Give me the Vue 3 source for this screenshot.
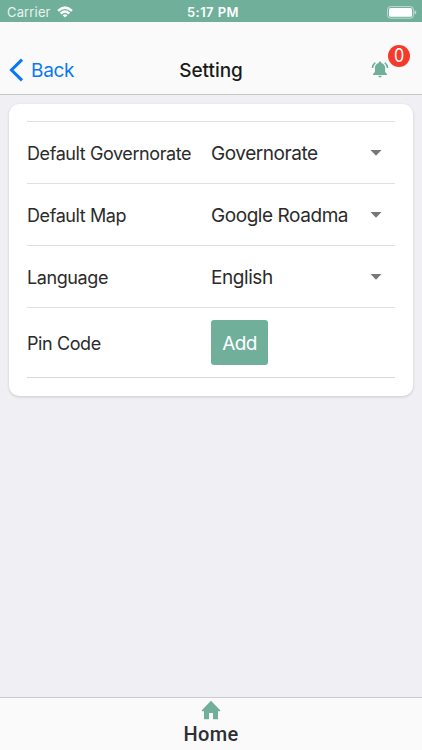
<script setup>
const rows = [
  { label: 'Default Governorate', value: 'Governorate', key: 'gov' },
  { label: 'Default Map', value: 'Google Roadma', key: 'map' },
  { label: 'Language', value: 'English', key: 'lang' },
]
</script>

<template>
  <div class="screen">
    <div class="status">
      <div class="side">
        <span class="carrier">Carrier</span>
        <svg class="wifi" width="16" height="12" viewBox="0 0 16 12">
          <path d="M.2 4Q8-3.4 15.8 4L14.1 5.7Q8 .2 1.9 5.7Z" fill="#fff" />
          <path d="M2.9 6.7Q8 2 13.1 6.7L11.4 8.4Q8 5.3 4.6 8.4Z" fill="#fff" />
          <path d="M5.6 9.2Q8 7.2 10.4 9.2L8 11.6Z" fill="#fff" />
        </svg>
      </div>
      <span class="time">5:17 PM</span>
      <div class="side right">
        <svg width="30" height="13" viewBox="0 0 30 13">
          <rect x=".6" y=".6" width="25.8" height="11.6" rx="3" fill="none" stroke="#fff" stroke-opacity=".55" />
          <rect x="2" y="2" width="23" height="8.8" rx="1.6" fill="#fff" />
          <path d="M27.6 4.3Q29.3 5 29.3 6.4Q29.3 7.8 27.6 8.5Z" fill="#fff" fill-opacity=".6" />
        </svg>
      </div>
    </div>

    <header class="navbar">
      <div class="back">
        <svg width="15" height="24" viewBox="0 0 15 24">
          <path d="M13 1.6L2.5 12L13 22.4" fill="none" stroke="#0a78f5" stroke-width="3.1" />
        </svg>
        <span class="back-text">Back</span>
      </div>
      <h1>Setting</h1>
      <div class="alerts">
        <svg width="18" height="18" viewBox="0 0 18 18" fill="#70b09b">
          <path d="M9 .6C9.8 .6 10.3 1.1 10.3 1.9C13 2.5 14.1 4.6 14.1 7V11L16 12.9V13.9H2V12.9L3.9 11V7C3.9 4.6 5 2.5 7.7 1.9C7.7 1.1 8.2 .6 9 .6Z" />
          <path d="M7.1 14.8H10.9Q10.5 16.6 9 16.6Q7.5 16.6 7.1 14.8Z" />
          <path d="M4.3 1.6Q1.7 3.5 1.4 7M13.7 1.6Q16.3 3.5 16.6 7" fill="none" stroke="#70b09b" stroke-width="1.5" />
        </svg>
        <span class="badge"><span class="count">0</span></span>
      </div>
    </header>

    <main>
      <section class="card">
        <div v-for="row in rows" :key="row.key" class="row">
          <div class="label">{{ row.label }}</div>
          <div class="value">{{ row.value }}</div>
          <svg class="caret" width="12" height="6" viewBox="0 0 12 6"><path d="M.5 0H11.5L6 5.7Z" fill="#777" /></svg>
        </div>
        <div class="row pin">
          <div class="label">Pin Code</div>
          <button class="add">Add</button>
        </div>
      </section>
    </main>

    <footer class="tabbar">
      <svg width="20" height="20" viewBox="0 0 20 20"><path d="M10 .8L19.2 10.2V11.2H17V19.2H12V13H8V19.2H3V11.2H.8V10.2Z" fill="#70b09b" /></svg>
      <span class="home">Home</span>
    </footer>
  </div>
</template>

<style>
body {
  margin: 0;
}
</style>

<style scoped>
.screen {
  width: 422px;
  height: 750px;
  display: flex;
  flex-direction: column;
  overflow: hidden;
  background: #efeff4;
  font-family: Inter, "Liberation Sans", sans-serif;
  color: #2b2b2b;
}
.status {
  height: 22px;
  flex: none;
  box-sizing: border-box;
  display: flex;
  align-items: center;
  padding: 2px 5px 0 7px;
  background: #70b09b;
  color: #fff;
}
.side {
  flex: 1;
  display: flex;
  align-items: center;
  gap: 6px;
}
.side.right {
  justify-content: flex-end;
}
.carrier {
  font-size: 13px;
  line-height: 18px;
  letter-spacing: 0.15px;
  opacity: 0.85;
}
.time {
  margin-left: 2px;
  font-size: 13px;
  line-height: 18px;
  font-weight: 600;
  letter-spacing: 0.45px;
}
.navbar {
  height: 73px;
  flex: none;
  box-sizing: border-box;
  display: grid;
  grid-template-columns: 1fr auto 1fr;
  align-items: center;
  padding: 24px 9px 0;
  border-bottom: 1px solid #c6c6c9;
  background: #fafafa;
}
.back {
  display: flex;
  align-items: center;
  gap: 7px;
  color: #0a78f5;
  font-size: 19px;
  line-height: 24px;
}
.back-text {
  padding-top: 1px;
  letter-spacing: -0.3px;
}
h1 {
  margin: 0;
  padding-top: 1px;
  font-size: 19px;
  line-height: 24px;
  font-weight: 500;
  letter-spacing: -0.05px;
  color: #1a1a1a;
}
.alerts {
  position: relative;
  justify-self: end;
  height: 18px;
  margin-right: 24px;
}
.alerts svg {
  display: block;
}
.badge {
  position: absolute;
  left: 17px;
  top: -16px;
  width: 22px;
  height: 22px;
  border-radius: 50%;
  background: #f5392a;
  color: #fff;
  font-size: 18px;
  line-height: 22px;
  text-align: center;
}
.count {
  display: block;
  font-weight: 400;
  transform: scaleX(0.9);
}
main {
  flex: 1;
  padding: 9px 9px 0;
}
.card {
  box-sizing: border-box;
  height: 292px;
  padding: 17px 18px 18px;
  border-radius: 10px;
  background: #fff;
  box-shadow: 0 1px 3px rgba(0, 0, 0, 0.16);
}
.row {
  box-sizing: border-box;
  height: 62px;
  display: flex;
  align-items: center;
  border-top: 1px solid #e0e0e0;
  padding-right: 13px;
}
.row.pin {
  height: 71px;
  border-bottom: 1px solid #d8d8d8;
}
.label {
  width: 184px;
  flex: none;
  padding-top: 2px;
  font-size: 18px;
  line-height: 24px;
  letter-spacing: -0.41px;
  white-space: nowrap;
}
.value {
  flex: 1;
  padding-top: 2px;
  font-size: 19px;
  line-height: 24px;
  letter-spacing: -0.44px;
  white-space: nowrap;
}
.add {
  width: 57px;
  height: 45px;
  margin: 0;
  padding: 2px 0 0;
  border: 0;
  border-radius: 3px;
  background: #70b09b;
  color: #fff;
  font-family: inherit;
  font-size: 19px;
  line-height: 24px;
  letter-spacing: -0.7px;
}
.tabbar {
  height: 53px;
  flex: none;
  box-sizing: border-box;
  display: flex;
  flex-direction: column;
  align-items: center;
  padding-top: 2px;
  border-top: 1px solid #c9c9ce;
  background: #fafafa;
}
.tabbar svg {
  flex: none;
}
.home {
  margin-top: 1px;
  font-family: Roboto, "Liberation Sans", sans-serif;
  font-size: 20px;
  line-height: 26px;
  font-weight: 500;
  letter-spacing: 0.3px;
  color: #2d2f33;
}
</style>
